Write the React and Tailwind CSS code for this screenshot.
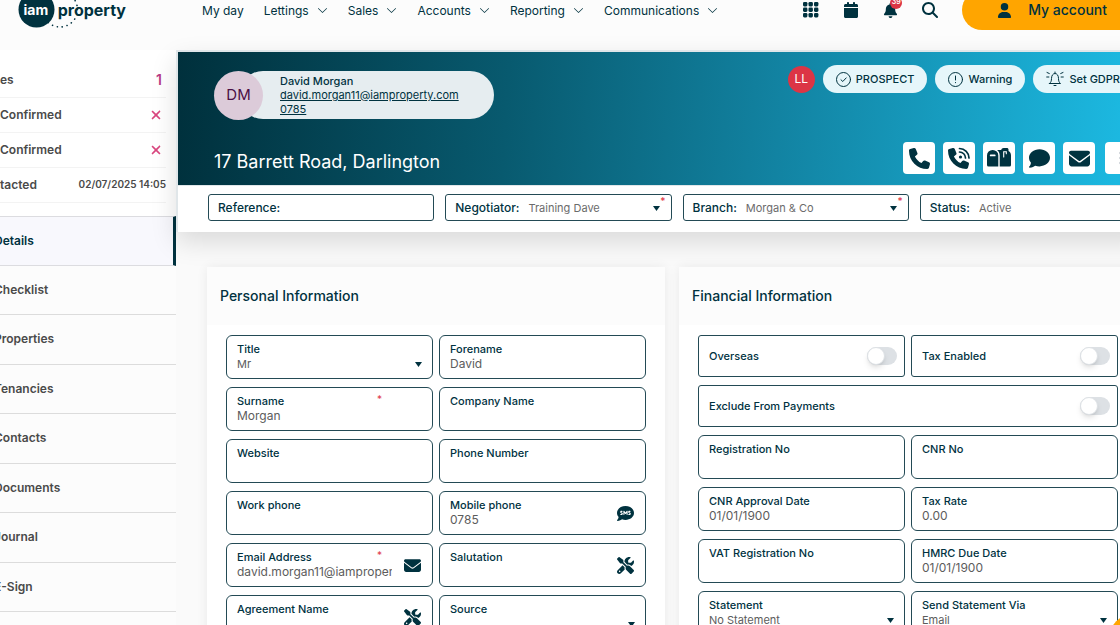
import React, { useState } from 'react';
import { BsChevronDown, BsThreeDotsVertical } from 'react-icons/bs';
import { FaPhone, FaComment, FaEnvelope, FaCalendar, FaBell, FaUser, FaMagnifyingGlass, FaCommentSms, FaScrewdriverWrench, FaXmark } from 'react-icons/fa6';

const NAV = [
    { label: 'My day' },
    { label: 'Lettings', menu: true },
    { label: 'Sales', menu: true },
    { label: 'Accounts', menu: true },
    { label: 'Reporting', menu: true },
    { label: 'Communications', menu: true }
];

const SIDE_LINKS = ['Details', 'Checklist', 'Properties', 'Tenancies', 'Contacts', 'Documents', 'Journal', 'E-Sign'];

const PERSONAL = [
    { label: 'Title', value: 'Mr', select: true },
    { label: 'Forename', value: 'David' },
    { label: 'Surname', value: 'Morgan', required: true },
    { label: 'Company Name' },
    { label: 'Website' },
    { label: 'Phone Number' },
    { label: 'Work phone' },
    { label: 'Mobile phone', value: '0785', icon: FaCommentSms },
    { label: 'Email Address', value: 'david.morgan11@iamproperty.com', required: true, icon: FaEnvelope },
    { label: 'Salutation', icon: FaScrewdriverWrench },
    { label: 'Agreement Name', icon: FaScrewdriverWrench },
    { label: 'Source', select: true }
];

const FINANCIAL = [
    { label: 'Registration No' },
    { label: 'CNR No' },
    { label: 'CNR Approval Date', value: '01/01/1900' },
    { label: 'Tax Rate', value: '0.00' },
    { label: 'VAT Registration No' },
    { label: 'HMRC Due Date', value: '01/01/1900' },
    { label: 'Statement', value: 'No Statement', select: true },
    { label: 'Send Statement Via', value: 'Email', select: true }
];

const Logo = () => (
    <a href="#home" aria-label="iam property" className="relative flex items-center h-9 w-[108px] shrink-0">
        <svg className="absolute inset-0" width="108" height="36" viewBox="0 0 108 36" fill="none">
            <circle cx="18.5" cy="17.5" r="18" fill="#00323f" />
            <circle cx="42" cy="17.5" r="17.5" stroke="#00323f" strokeWidth="1.6" strokeLinecap="round" strokeDasharray="0.1 4.9" />
        </svg>
        <span className="relative w-9 text-center text-sm font-bold text-white">iam</span>
        <span className="relative ml-1 text-base font-bold text-[#00323f]">property</span>
    </a>
);

const GridIcon = () => (
    <svg width="16" height="16" viewBox="0 0 16 16" fill="currentColor">
        {[0, 5.5, 11].map(y => [0, 5.5, 11].map(x => (
            <rect key={`${x}-${y}`} x={x} y={y} width="4.400" height="4.400" rx="1.300" />
        )))}
    </svg>
);

const PhoneWaves = () => (
    <svg width="24" height="24" viewBox="0 0 24 24" fill="none">
        <path transform="translate(1 2) scale(.041)" fill="currentColor" d="M164.900 24.600c-7.700-18.600-28-28.500-47.400-23.200l-88 24C12.100 30.200 0 46 0 64C0 311.400 200.600 512 448 512c18 0 33.800-12.100 38.600-29.500l24-88c5.300-19.400-4.600-39.700-23.200-47.400l-96-40c-16.300-6.800-35.200-2.100-46.300 11.600L304.700 368C234.300 334.700 177.300 277.700 144 207.300L193.300 167c13.700-11.200 18.400-30 11.600-46.300l-40-96z" />
        <path d="M12.500 2.500a9.500 9.500 0 0 1 9.500 9.500M12.500 6a6 6 0 0 1 6 6" stroke="currentColor" strokeWidth="1.700" strokeLinecap="round" />
        <circle cx="13.500" cy="11" r="1.600" fill="currentColor" />
    </svg>
);

const Mailbox = () => (
    <svg width="24" height="20" viewBox="0 0 24 20" fill="currentColor">
        <path fillRule="evenodd" d="M5.500 2A5.500 5.500 0 0 0 0 7.500V17a1.500 1.500 0 0 0 1.500 1.500h9.800V7.500A5.500 5.500 0 0 0 5.800 2zM3.700 6.500h4a.9.900 0 0 1 0 1.800h-4a.9.900 0 0 1 0-1.800z" />
        <path d="M10 2h4.200c.2-1.300 1.200-2 2.500-2h3c1.200 0 1.800.7 1.800 1.600v1.500C23.200 4 24 5.600 24 7.500V17a1.500 1.500 0 0 1-1.500 1.500h-9.800v-11C12.700 5.200 11.700 3.200 10 2z" />
        <path d="M16.700 9V3.700h2.600v2" fill="none" stroke="#fff" strokeWidth="1.100" strokeLinecap="round" />
    </svg>
);

const CircleCheck = () => (
    <svg width="15" height="15" viewBox="0 0 15 15" fill="none" stroke="currentColor" strokeLinecap="round" strokeLinejoin="round">
        <circle cx="7.500" cy="7.500" r="7" />
        <path d="M5 7.800l1.800 1.700 3.400-3.600" />
    </svg>
);

const CircleAlert = () => (
    <svg width="15" height="15" viewBox="0 0 15 15" fill="none" stroke="currentColor" strokeLinecap="round">
        <circle cx="7.500" cy="7.500" r="7" />
        <path d="M7.500 4v4M7.500 10.500v.2" />
    </svg>
);

const BellRing = () => (
    <svg width="18" height="16" viewBox="0 0 18 16" fill="none" stroke="currentColor" strokeLinecap="round" strokeLinejoin="round">
        <path d="M9 1v1M3.500 12.500h11c-1.400-1.200-2-2.500-2-5C12.500 4.500 11 2.500 9 2.500S5.500 4.500 5.500 7.500c0 2.500-.6 3.800-2 5zM8 14.500h2M1 1.500l2.300 1M17 1.500l-2.300 1M.7 6h2.200M17.300 6h-2.200" />
    </svg>
);

const Caret = () => (
    <svg width="7" height="5" viewBox="0 0 7 5" className="shrink-0 pointer-events-none" fill="#00323f">
        <path d="M0 0h7L3.500 5z" />
    </svg>
);

const ACTIONS = [
    { label: 'Call', icon: <FaPhone size={21} /> },
    { label: 'Log call', icon: <PhoneWaves /> },
    { label: 'Letter', icon: <Mailbox /> },
    { label: 'Message', icon: <FaComment size={21} /> },
    { label: 'Email', icon: <FaEnvelope size={21} /> }
];

const Header = () => (
    <header className="h-[50px] shrink-0 bg-[#fcfcfc]">
        <div className="flex h-10 -mt-[10px] items-center pl-[18px] pr-1 text-[#00323f]">
            <Logo />
            <nav className="ml-[76px] flex items-center gap-5 pt-px text-xs">
                {NAV.map(item => (
                    <a key={item.label} href="#nav" className="flex items-center gap-2 whitespace-nowrap">
                        {item.label}
                        {item.menu && <BsChevronDown size={11} />}
                    </a>
                ))}
            </nav>
            <div className="ml-auto flex items-center gap-6">
                <button aria-label="Apps"><GridIcon /></button>
                <button aria-label="Calendar"><FaCalendar size={16} /></button>
                <button aria-label="Notifications" className="relative">
                    <FaBell size={15} />
                    <span className="absolute -top-[6px] left-[7px] flex size-3 items-center justify-center rounded-full bg-[#dc3545] text-[7px] font-semibold text-white">39</span>
                </button>
                <button aria-label="Search"><FaMagnifyingGlass size={16} /></button>
                <button className="flex h-10 items-center gap-4 rounded-full bg-[#ffa500] px-[35px] text-sm font-medium whitespace-nowrap">
                    <FaUser size={15} />
                    My account
                </button>
            </div>
        </div>
    </header>
);

const StatRow = ({ label, children }) => (
    <div className="mr-[10px] flex h-[35px] items-center justify-between border-b border-[#f3f3f3]">
        <span>{label}</span>
        {children}
    </div>
);

const Sidebar = () => (
    <aside className="w-44 shrink-0 bg-[#fcfcfc] text-xs font-semibold text-[#4a4a4a]">
        <div className="bg-white py-[13px]">
            <StatRow label="es"><span className="mr-1 text-sm text-[#b83b86]">1</span></StatRow>
            <StatRow label="Confirmed"><FaXmark size={14} className="mr-[3px] text-[#d9467f]" /></StatRow>
            <StatRow label="Confirmed"><FaXmark size={14} className="mr-[3px] text-[#d9467f]" /></StatRow>
            <StatRow label="tacted"><span className="text-[10px]">02/07/2025 14:05</span></StatRow>
        </div>
        <nav className="-ml-[6px] grid h-[396px] auto-rows-fr">
            {SIDE_LINKS.map((link, i) => (
                <a
                    key={link}
                    href="#section"
                    className={i === 0
                        ? 'flex items-center border-y border-r-3 border-y-[#dcdce0] border-r-[#00323f] bg-[#f8f8fd] text-[#00323f]'
                        : 'flex items-center border-b border-[#dcdcdc]'}
                >
                    {link}
                </a>
            ))}
        </nav>
    </aside>
);

const Pill = ({ icon, children }) => (
    <button className="flex h-7 items-center gap-[5px] rounded-full bg-[#e6f6fa] px-[13px] text-[11px] font-medium whitespace-nowrap text-[#00323f]">
        {icon}
        {children}
    </button>
);

const Hero = () => (
    <div className="border-y border-[#e0e6e9] bg-[linear-gradient(94deg,#00303c_0%,#085a6f_34%,#1283a2_62%,#1cb8e0_97%)] pt-[13px] pr-[9px] pb-[11px] pl-9">
        <div className="flex items-start justify-between">
            <div className="mt-[6px] flex">
                <div className="z-10 flex size-[49px] items-center justify-center rounded-full bg-[#dccbd9] text-[15px] text-[#4b0f45]">DM</div>
                <div className="-ml-6 flex h-[48px] w-[255px] flex-col justify-center rounded-full bg-[#e6edf0] pl-[41px] text-[11px] leading-[14px] text-[#00323f]">
                    <span className="font-medium">David Morgan</span>
                    <a href="#email" className="underline">david.morgan11@iamproperty.com</a>
                    <a href="#phone" className="underline">0785</a>
                </div>
            </div>
            <div className="mr-1 flex items-center gap-2">
                <span className="flex size-[27px] items-center justify-center rounded-full bg-[#dc3545] text-xs text-white">LL</span>
                <Pill icon={<CircleCheck />}>PROSPECT</Pill>
                <Pill icon={<CircleAlert />}>Warning</Pill>
                <Pill icon={<BellRing />}>Set GDPR</Pill>
            </div>
        </div>
        <div className="mt-[22px] flex items-center justify-between">
            <h1 className="pt-2 text-lg leading-6 text-white">17 Barrett Road, Darlington</h1>
            <div className="flex gap-2">
                {ACTIONS.map(action => (
                    <button key={action.label} aria-label={action.label} className="flex size-8 items-center justify-center rounded-sm bg-white text-[#00323f]">
                        {action.icon}
                    </button>
                ))}
                <button aria-label="More" className="ml-[2px] flex size-8 items-center justify-center rounded-sm bg-white text-gray-400">
                    <BsThreeDotsVertical size={16} />
                </button>
            </div>
        </div>
    </div>
);

const BarField = ({ label, value, required, children }) => (
    <label className="relative flex h-[27px] items-center gap-[9px] rounded-[3px] border border-[#234a55] pt-px pr-[11px] pl-[9px] text-xs font-medium text-[#00323f]">
        {label}
        {value ? (
            <select className="min-w-0 flex-1 appearance-none text-[11px] font-normal text-[#6b6b6b] outline-none">
                <option>{value}</option>
            </select>
        ) : (
            <input className="min-w-0 flex-1 outline-none" />
        )}
        {value && <Caret />}
        {required && <span className="absolute top-0 right-[5px] text-[10px] text-[#e0394a]">*</span>}
    </label>
);

const Field = ({ field }) => {
    const Icon = field.icon;
    return (
        <label className="relative flex h-11 items-center rounded-md border border-[#234a55] px-[10px]">
            <span className="flex min-w-0 flex-1 flex-col">
                <span className="text-[11px] leading-[14px] font-medium text-[#00323f]">{field.label}</span>
                {field.select ? (
                    <span className="flex items-center">
                        <select className="h-4 min-w-0 flex-1 appearance-none text-[11px] leading-4 text-[#5c5c5c] outline-none">
                            <option>{field.value}</option>
                        </select>
                        <Caret />
                    </span>
                ) : (
                    <input defaultValue={field.value} className="h-4 w-full text-xs leading-4 text-[#5c5c5c] outline-none" />
                )}
            </span>
            {field.required && <span className="absolute top-1 right-[50px] text-[10px] text-[#e0394a]">*</span>}
            {Icon && (
                <button aria-label={`${field.label} action`} className="mr-px ml-3 text-[#00323f]">
                    <Icon size={17} />
                </button>
            )}
        </label>
    );
};

const Toggle = ({ label, wide }) => {
    const [on, setOn] = useState(false);
    return (
        <label className={`${wide ? 'col-span-2' : ''} flex h-[42px] items-center justify-between rounded-[3px] border border-[#234a55] pr-[7px] pl-[10px] text-[11px] font-medium text-[#00323f]`}>
            {label}
            <input
                type="checkbox"
                checked={on}
                onChange={e => setOn(e.target.checked)}
                className="h-[18px] w-[30px] appearance-none rounded-full bg-[#dde1e5] before:block before:size-[18px] before:rounded-full before:border before:border-[#dde1e5] before:bg-white before:shadow-md checked:bg-[#00323f] checked:before:ml-3"
            />
        </label>
    );
};

const Card = ({ title, children }) => (
    <section className="rounded-sm bg-white shadow-[0_0_12px_rgba(0,0,0,0.07)]">
        <h2 className="flex h-[58px] items-center bg-[#fcfcfc] px-[13px] text-sm font-medium text-[#00323f]">{title}</h2>
        <div className="grid grid-cols-2 gap-x-[6px] gap-y-2 px-[19px] pt-[10px] pb-6">
            {children}
        </div>
    </section>
);

const App = () => (
    <div className="h-screen overflow-hidden bg-[#fafafa] font-['Inter',sans-serif]">
        {/* the contact page runs a little wider than its window */}
        <div className="-mr-[26px] flex h-full flex-col">
            <Header />
            <div className="flex min-h-0 flex-1">
                <Sidebar />
                <main className="min-w-0 flex-1">
                    <div className="border-t border-l-2 border-[#e0e6e9] bg-white shadow-[0_10px_24px_rgba(0,0,0,0.13)]">
                        <Hero />
                        <div className="grid grid-cols-4 gap-[11px] pt-2 pb-[11px] pl-[30px]">
                            <BarField label="Reference:" />
                            <BarField label="Negotiator:" value="Training Dave" required />
                            <BarField label="Branch:" value="Morgan & Co" required />
                            <BarField label="Status:" value="Active" />
                        </div>
                    </div>
                    <div className="mt-[35px] grid grid-cols-2 gap-[14px] pr-[9px] pl-[31px]">
                        <Card title="Personal Information">
                            {PERSONAL.map(field => <Field key={field.label} field={field} />)}
                        </Card>
                        <Card title="Financial Information">
                            <Toggle label="Overseas" />
                            <Toggle label="Tax Enabled" />
                            <Toggle label="Exclude From Payments" wide />
                            {FINANCIAL.map(field => <Field key={field.label} field={field} />)}
                        </Card>
                    </div>
                </main>
            </div>
        </div>
        <button aria-label="Help" className="fixed -right-11 -bottom-11 size-14 rounded-full bg-[#ffa500]" />
    </div>
);

export default App;
